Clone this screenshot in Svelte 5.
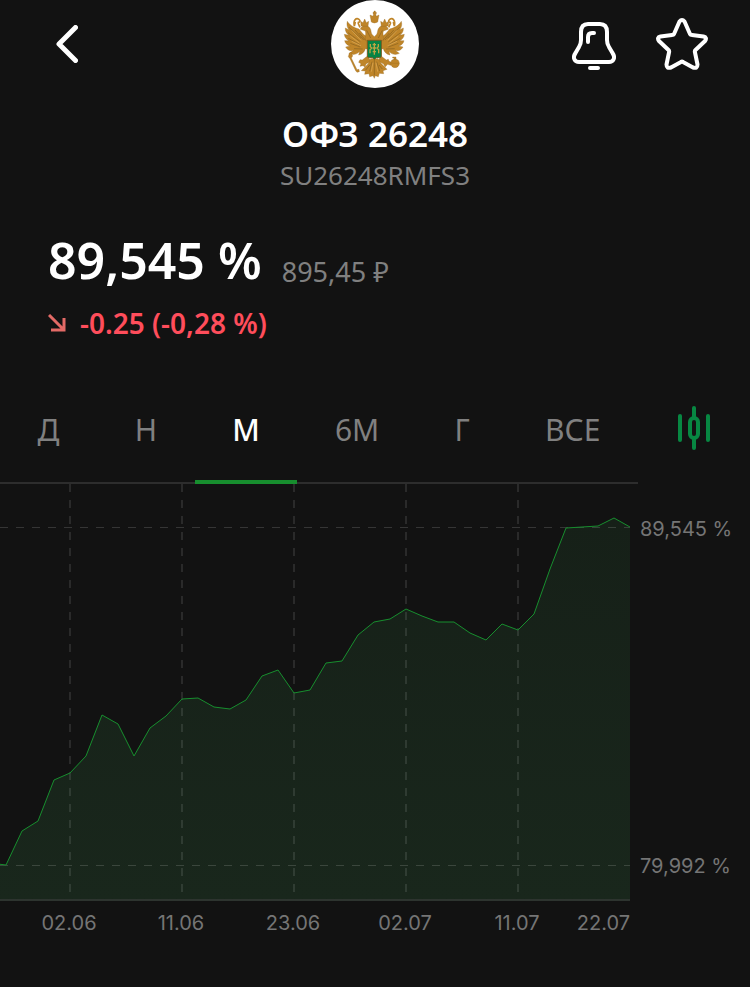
<script lang="ts">
  const periods = [
    { id: "day", label: "Д" },
    { id: "week", label: "Н" },
    { id: "month", label: "М" },
    { id: "half", label: "6М" },
    { id: "year", label: "Г" },
    { id: "all", label: "ВСЕ" },
  ];
  const dates = ["02.06", "11.06", "23.06", "02.07", "11.07", "22.07"];
  const levels = ["89,545 %", "79,992 %"];

  // plot is 630 x 417 units, one trading day every 16 units
  const step = 16;
  const base = 416;
  const firstX = -10;
  const values = [
    379, 381, 347, 337, 296, 289, 272, 231, 240, 272, 244, 232, 215, 214, 223, 225, 216, 192, 186, 209, 206,
    179, 177, 151, 138, 135, 125, 132, 138, 138, 149, 156, 140, 146, 130, 85, 44, 43, 42, 34, 43,
  ];
  const gridX = [70, 182, 294, 406, 518];
  const gridY = [43, 381];

  const line = values.map((y, i) => `${firstX + i * step},${y}`).join(" ");
  const area = `${firstX},${base} ${line} 630,${base}`;

  let period = $state("month");
  let starred = $state(false);
</script>

<main class="page">
  <header>
    <button class="icon back" aria-label="Назад">
      <svg width="22" height="38" viewBox="0 0 22 38">
        <path d="M19.500 2.500 3 19 19.500 35.500" />
      </svg>
    </button>

    <svg class="emblem" width="88" height="88" viewBox="18 0 264 264" role="img" aria-label="Герб">
      <circle cx="150" cy="132" r="132" fill="#fff" />
      <g fill="#bf8529" stroke="#94671f" stroke-width="1" stroke-linejoin="round">
        <path d="M126 108C114 106 110 96 102 87C90 84 76 78 67 64C64 75 67 83 72 90L61 84C60 94 65 100 71 106L58 103C59 113 65 119 72 122L59 122C61 131 67 136 76 138L62 141C67 150 75 154 86 151L73 160C86 167 97 162 104 154L101 165C112 163 119 155 121 146L130 148V112Z" />
        <path d="M170 108C182 106 186 96 194 87C206 84 220 78 229 64C232 75 229 83 224 90L235 84C236 94 231 100 225 106L238 103C237 113 231 119 224 122L237 122C235 131 229 136 220 138L234 141C229 150 221 154 210 151L223 160C210 167 199 162 192 154L195 165C184 163 177 155 175 146L166 148V112Z" />
        <path d="M106 88C108 75 126 73 134 83C140 91 137 99 142 104L148 110 154 104C159 99 156 91 162 83C170 73 188 75 190 88L177 92C171 96 176 106 175 122H121C120 108 125 96 119 92Z" />
        <path d="M108 78 107 64 114 68 119 57 124 68 131 64 129 79ZM169 79 167 64 174 68 179 57 184 68 191 64 190 78Z" />
        <path d="M139 66 135 45 144 49 146 41H144V37H147V33H151V37H154V41H152L154 49 162 45 158 66Q148 72 139 66Z" />
        <path d="M127 168 112 180 105 179 101 187 108 191 105 199 114 197 120 201 123 192 138 183ZM168 168 184 180 190 178 192 184 202 188 197 196 188 193 180 201 176 192 159 183Z" />
        <path d="M137 176H159L168 190 186 208 174 212 176 221 163 220 160 230 151 227 148 235 144 227 134 230 132 221 119 223 121 213 109 212 129 192Z" />
        <path d="M73 159 79 157 83 168 79 174 96 209 102 208 103 215 96 217 92 212 75 176 70 170Z" />
        <circle cx="210" cy="190" r="13" />
        <path d="M207 178V174H203V171H213V174H213V178ZM199 190H221" />
      </g>
      <g fill="none" stroke="#bf8529" stroke-width="5">
        <path d="M88 78C84 61 93 52 102 58C108 63 104 69 98 66M99 69 105 82M91 66 88 78" />
        <path d="M208 78C212 61 203 52 194 58C188 63 192 69 198 66M197 69 191 82M205 66 208 78" />
      </g>
      <g fill="none" stroke="#87601f" stroke-width="2">
        <path d="M72 82 108 115M69 98 106 125M70 115 105 134M76 130 106 141M87 146 113 147M90 90 116 120M103 99 121 120" />
        <path d="M224 82 188 115M227 98 190 125M226 115 191 134M220 130 190 141M209 146 183 147M206 90 180 120M193 99 175 120" />
        <path d="M148 180V226M141 185 134 214M155 185 164 213M135 194 122 210M162 195 172 207M125 91 137 114M172 91 160 114" />
      </g>
      <g fill="none" stroke="#e0ae5a" stroke-width="2">
        <path d="M80 91 108 121M76 108 103 129M80 124 108 137M216 91 188 121M220 108 193 129M216 124 188 137M144 188 139 215M153 188 158 215" />
      </g>
      <path d="M127 121H169V168Q169 173 163 173H154L148 178 142 173H133Q127 173 127 168Z" fill="#078344" stroke="#795b21" stroke-width="3" />
      <path d="M136 132V140L140 144 135 149V160M148 129V164M160 132V140L156 144 161 149V160M143 134H153M143 144H153M143 155H153" fill="none" stroke="#bba443" stroke-width="4" />
    </svg>

    <div class="tools">
      <button class="icon" aria-label="Уведомления">
        <svg width="44" height="52" viewBox="0 -4 44 52">
          <path d="M16 2H28Q35 2 35 10V18Q35 22 37 25L40.500 31C44 36 41 40 37 40H7C3 40 0 36 3.500 31L7 25Q9 22 9 18V10Q9 2 16 2Z" />
          <path d="M16 20V15Q16 11 20 11H22M18 46H26" />
        </svg>
      </button>
      <button class="icon" aria-label="В избранное" aria-pressed={starred} onclick={() => (starred = !starred)}>
        <svg class:starred width="52" height="52" viewBox="0 0 52 52">
          <path d="M23.500 3.500Q26 .5 28.500 3.500L34 16Q34.500 17 36 17L47.500 18.500Q51.500 19.500 49 23L39.500 32Q38.500 33 39 34.500L41.500 46.500Q41.500 51 37 49.500L27 44Q26 43.300 25 44L15 49.500Q10.500 51 10.500 46.500L13 34.500Q13.500 33 12.500 32L3 23Q.5 19.500 4.500 18.500L16 17Q17.500 17 18 16Z" />
        </svg>
      </button>
    </div>
  </header>

  <section class="name">
    <h1>ОФЗ 26248</h1>
    <p>SU26248RMFS3</p>
  </section>

  <section class="quote">
    <div class="price">
      <strong>89,545 %</strong>
      <span>895,45 ₽</span>
    </div>
    <p class="change">
      <svg width="18" height="18" viewBox="0 0 18 18" aria-hidden="true">
        <path d="M1 1 16 16M16 4V16H3" />
      </svg>
      -0.25 (-0,28 %)
    </p>
  </section>

  <nav>
    <div class="tabs" role="tablist">
      {#each periods as p (p.id)}
        <button role="tab" class:active={period === p.id} aria-selected={period === p.id} onclick={() => (period = p.id)}>
          {p.label}
        </button>
      {/each}
    </div>
    <button class="candles" aria-label="Свечи">
      <svg width="32" height="44" viewBox="0 0 32 44">
        <path d="M2 10V34M30 10V34M16 2V11M16 33V42" />
        <rect x="12" y="12" width="8" height="20" rx="4" />
      </svg>
    </button>
  </nav>

  <section class="chart">
    <svg viewBox="0 0 630 417" role="img" aria-label="График цены за месяц">
      <defs>
        <linearGradient id="fill" x1="0" y1="0" x2="0" y2="1">
          <stop offset="0" stop-color="#162018" />
          <stop offset="1" stop-color="#19271c" />
        </linearGradient>
      </defs>
      <polygon points={area} fill="url(#fill)" />
      <g class="grid">
        {#each gridX as x}
          <line x1={x} x2={x} y1="0" y2="410" stroke-width="2" />
        {/each}
        {#each gridY as y}
          <line class="level" x1="0" x2="630" y1={y + 0.5} y2={y + 0.5} stroke-width="1" />
        {/each}
      </g>
      <line class="base" x1="0" x2="630" y1={base} y2={base} />
      <polyline points={line} />
    </svg>
    <div class="levels">
      {#each levels as level}
        <span>{level}</span>
      {/each}
    </div>
    <div class="dates">
      {#each dates as date}
        <span>{date}</span>
      {/each}
    </div>
  </section>
</main>

<style>
  :global(body) {
    background: #121212;
  }
  .page {
    padding-bottom: 48px;
    background: #121212;
    color: #fff;
    font-family: "Noto Sans", sans-serif;
  }
  h1,
  p {
    margin: 0;
  }
  button {
    padding: 0;
    border: none;
    background: none;
    color: inherit;
    font: inherit;
    cursor: pointer;
  }
  svg {
    display: block;
  }
  header {
    display: grid;
    grid-template-columns: 1fr auto 1fr;
    align-items: center;
    padding: 0 42px 0 56px;
  }
  .emblem {
    margin-right: 14px;
  }
  .icon path {
    fill: none;
    stroke: #fff;
    stroke-width: 4;
    stroke-linecap: round;
    stroke-linejoin: round;
  }
  .back {
    justify-self: start;
  }
  .back path {
    stroke-width: 5;
  }
  .icon .starred path {
    fill: #fff;
  }
  .tools {
    display: flex;
    align-items: center;
    justify-content: flex-end;
    gap: 40px;
  }
  .name {
    margin-top: 24px;
    text-align: center;
  }
  h1 {
    font-size: 35px;
    font-weight: 600;
    line-height: 44px;
  }
  .name p {
    color: #808080;
    font-size: 26px;
    line-height: 38px;
  }
  .quote {
    padding: 34px 48px 0;
  }
  .price {
    display: flex;
    align-items: flex-end;
    gap: 20px;
  }
  .price strong {
    font-size: 50px;
    font-weight: 600;
    line-height: 64px;
  }
  .price span {
    color: #808080;
    font-size: 27px;
    line-height: 40px;
  }
  .change {
    display: flex;
    align-items: center;
    gap: 14px;
    margin-top: 12px;
    color: #ff4d5b;
    font-size: 28px;
    font-weight: 600;
    line-height: 38px;
  }
  .change path {
    fill: none;
    stroke: #e36a66;
    stroke-width: 3;
  }
  nav {
    display: flex;
    margin-top: 32px;
  }
  .tabs {
    display: flex;
    flex: 1;
    border-bottom: 2px solid #2d2d2d;
  }
  .tabs button {
    flex: 1 1 auto;
    height: 110px;
    margin-bottom: -2px;
    padding-top: 6px;
    border-bottom: 4px solid transparent;
    color: #808080;
    font-size: 30px;
    line-height: 40px;
  }
  .tabs .active {
    border-color: #178e2e;
    color: #fff;
    font-weight: 500;
  }
  .candles {
    display: flex;
    align-items: center;
    justify-content: center;
    width: 112px;
    padding-bottom: 2px;
  }
  .candles path,
  .candles rect {
    fill: none;
    stroke: #078742;
    stroke-width: 4;
    stroke-linecap: round;
  }
  .chart {
    display: grid;
    grid-template-columns: 1fr 120px;
    color: #757575;
    font-family: Inter, sans-serif;
    font-size: 20px;
    line-height: 24px;
  }
  .chart svg {
    width: 100%;
  }
  .grid line {
    stroke: #fff;
    stroke-opacity: 0.1;
    stroke-dasharray: 8 8;
  }
  .grid .level {
    stroke-opacity: 0.15;
  }
  .base {
    stroke: #2d342f;
    stroke-width: 2;
  }
  polyline {
    fill: none;
    stroke: #178e2e;
    stroke-width: 1;
  }
  .levels {
    display: flex;
    flex-direction: column;
    justify-content: space-between;
    padding: 33px 0 23px 10px;
  }
  .dates {
    display: grid;
    grid-template-columns: repeat(5, 112fr) 57fr;
    padding: 10px 0 0 13px;
    text-align: center;
  }
  .dates span:last-child {
    text-align: right;
  }
</style>
